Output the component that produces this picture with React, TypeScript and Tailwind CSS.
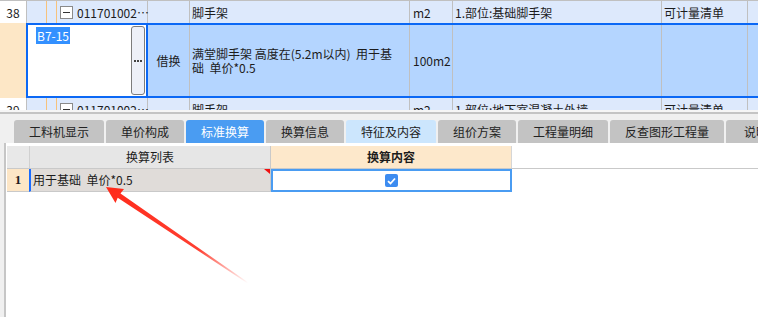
import React from "react";

const FONT = "font-['Noto_Sans_CJK_SC','Noto_Sans',sans-serif]";

interface Tab {
  label: string;
  width: string;
  tone: string;
}

const tabs: Tab[] = [
  { label: "工料机显示", width: "w-[90px]", tone: "bg-[#c3c3c3] text-[#222]" },
  { label: "单价构成", width: "w-[78px]", tone: "bg-[#c3c3c3] text-[#222]" },
  { label: "标准换算", width: "w-[78px]", tone: "bg-[#4a9cf2] text-white" },
  { label: "换算信息", width: "w-[78px]", tone: "bg-[#c3c3c3] text-[#222]" },
  { label: "特征及内容", width: "w-[90px]", tone: "bg-[#cce6fd] text-[#222]" },
  { label: "组价方案", width: "w-[78px]", tone: "bg-[#c3c3c3] text-[#222]" },
  { label: "工程量明细", width: "w-[90px]", tone: "bg-[#c3c3c3] text-[#222]" },
  { label: "反查图形工程量", width: "w-[114px]", tone: "bg-[#c3c3c3] text-[#222]" },
  { label: "说明", width: "w-[60px]", tone: "bg-[#c3c3c3] text-[#222]" },
];

function TreeCode() {
  // orange tree guides + collapse box + code
  return (
    <div className="flex h-full w-[121px] shrink-0 items-center border-r border-[#c0c0c0]">
      <div className="w-[19px] shrink-0" />
      <div className="h-full w-px shrink-0 bg-[#f6c27c]" />
      <div className="w-[9px] shrink-0" />
      <div className="h-full w-px shrink-0 bg-[#f6c27c]" />
      <div className="w-[3px] shrink-0" />
      <div className="flex h-[13px] w-[13px] shrink-0 items-center justify-center border border-[#8a8a8a] bg-white">
        <div className="h-px w-[7px] bg-[#333]" />
      </div>
      <span className="ml-[4px] whitespace-nowrap">011701002…</span>
    </div>
  );
}

function ListRow({
  num,
  name,
  feature,
}: {
  num: string;
  name: string;
  feature: string;
}) {
  return (
    <div className="flex h-[23px] shrink-0 items-center bg-[#dde9fc]">
      <div className="flex h-full w-[27px] shrink-0 items-center justify-center border-r border-[#c0c0c0] bg-white">
        {num}
      </div>
      <TreeCode />
      <div className="h-full w-[42px] shrink-0 border-r border-[#c0c0c0]" />
      <div className="flex h-full w-[220px] shrink-0 items-center border-r border-[#c0c0c0] pl-[2px]">
        {name}
      </div>
      <div className="flex h-full w-[43px] shrink-0 items-center border-r border-[#c0c0c0] pl-[3px]">
        m2
      </div>
      <div className="flex h-full w-[209px] shrink-0 items-center border-r border-[#c0c0c0] pl-[2px] whitespace-nowrap">
        {feature}
      </div>
      <div className="flex h-full w-[86px] shrink-0 items-center border-r border-[#c0c0c0] pl-[2px]">
        可计量清单
      </div>
      <div className="h-full flex-1" />
    </div>
  );
}

function SelectedRow() {
  return (
    <div className="flex h-[75px] shrink-0">
      <div className="w-[26px] shrink-0 bg-[#fde7c6]" />
      <div className="flex flex-1 border-y-2 border-[#0b68f5] bg-[#b4d5ff]">
        <div className="flex w-[122px] shrink-0 border-x-2 border-[#0b68f5] bg-white">
          <div className="flex-1 pl-[8px] pt-[2px]">
            <span className="bg-[#3390ff] px-px leading-[12px] text-white">B7-15</span>
          </div>
          <div className="my-px mr-px flex w-[14px] items-center justify-center gap-[1px] rounded-[3px] border border-[#7c7c7c] bg-[#edf0f8]">
            <div className="h-[2px] w-[2px] bg-[#444]" />
            <div className="h-[2px] w-[2px] bg-[#444]" />
            <div className="h-[2px] w-[2px] bg-[#444]" />
          </div>
        </div>
        <div className="flex w-[42px] shrink-0 items-center justify-center border-r border-[#c0c0c0]">
          借换
        </div>
        <div className="flex w-[220px] shrink-0 flex-col justify-center border-r border-[#c0c0c0] pl-[2px] leading-[14px] whitespace-nowrap">
          <div>满堂脚手架 高度在(5.2m以内)&nbsp;&nbsp;用于基</div>
          <div>础&nbsp;&nbsp;单价*0.5</div>
        </div>
        <div className="flex w-[43px] shrink-0 items-center border-r border-[#c0c0c0] pl-[3px]">
          100m2
        </div>
        <div className="w-[209px] shrink-0 border-r border-[#c0c0c0]" />
        <div className="w-[86px] shrink-0 border-r border-[#c0c0c0]" />
        <div className="flex-1" />
      </div>
    </div>
  );
}

function CheckBox() {
  return (
    <div className="flex h-[13px] w-[13px] items-center justify-center rounded-[2px] bg-[#3d8cf0]">
      <svg width="9" height="8" viewBox="0 0 9 8">
        <path d="M1 4.2 L3.5 6.5 L8 1.5" fill="none" stroke="white" strokeWidth="1.8" />
      </svg>
    </div>
  );
}

export default function App() {
  return (
    <div className={`relative h-[317px] w-[758px] overflow-hidden bg-[#f0f0f0] text-[12px] text-[#1c1c1c] ${FONT}`}>
      {/* upper list */}
      <div className="flex h-[110px] flex-col overflow-hidden border-t border-[#c0c0c0] bg-white">
        <div className="h-[22px] shrink-0 overflow-hidden">
          <ListRow num="38" name="脚手架" feature="1.部位:基础脚手架" />
        </div>
        <SelectedRow />
        <ListRow num="39" name="脚手架" feature="1.部位:地下室混凝土外墙" />
      </div>
      <div className="h-[2px] bg-[#f6f6f6]" />
      <div className="h-[2px] bg-[#c4c4c4]" />

      {/* tabs */}
      <div className="flex gap-[2px] pl-[14px] pt-[6px]">
        {tabs.map((t) => (
          <div
            key={t.label}
            className={`flex h-[23px] shrink-0 items-center justify-center rounded-t-[3px] text-[12px] ${t.width} ${t.tone}`}
          >
            {t.label}
          </div>
        ))}
      </div>

      {/* lower panel */}
      <div className="ml-[4px] h-[200px] border-l-2 border-[#c6c6c6] bg-white pl-px pt-[3px]">
        <div className="flex h-[23px] border-b border-[#c9c9c9]">
          <div className="w-[23px] shrink-0 border-r border-[#d0d0d0] bg-[#e8e8e8]" />
          <div className="flex w-[241px] shrink-0 items-center justify-center border-r border-[#c9c9c9] bg-[#e6e6e6]">
            换算列表
          </div>
          <div className="flex w-[241px] shrink-0 items-center justify-center border-r border-[#d6d6d6] bg-[#fde8cb] font-bold">
            换算内容
          </div>
        </div>
        <div className="flex h-[23px]">
          <div className="flex w-[22px] shrink-0 items-center justify-center border-b border-[#c9c9c9] bg-[#fde6c6] font-['Liberation_Serif',serif] text-[13px] font-bold">
            1
          </div>
          <div className="relative flex w-[242px] shrink-0 items-center border-b border-l-2 border-r border-[#c9c9c9] border-l-[#1a6cff] bg-[#e0dcd9] pl-[2px] whitespace-nowrap">
            用于基础&nbsp;&nbsp;单价*0.5
            <svg className="absolute right-0 top-0" width="6" height="5" viewBox="0 0 6 5">
              <path d="M0 0 H6 V5 Z" fill="#f01010" />
            </svg>
          </div>
          <div className="flex w-[241px] shrink-0 items-center justify-center border-2 border-[#4a9cf2] bg-white">
            <CheckBox />
          </div>
        </div>
      </div>

      {/* red annotation arrow */}
      <svg className="pointer-events-none absolute left-0 top-0" width="758" height="317" viewBox="0 0 758 317">
        <defs>
          <linearGradient id="arrowFade" x1="248" y1="283" x2="106" y2="187" gradientUnits="userSpaceOnUse">
            <stop offset="0" stopColor="#ff2a1a" stopOpacity="0" />
            <stop offset="0.35" stopColor="#ff2a1a" stopOpacity="0.9" />
            <stop offset="1" stopColor="#ff2a1a" stopOpacity="1" />
          </linearGradient>
        </defs>
        <polygon
          points="106,187 124,189 120.5,193.6 248.3,282.6 247.7,283.4 117.7,197.8 115.5,203 106,187"
          fill="url(#arrowFade)"
        />
      </svg>
    </div>
  );
}
